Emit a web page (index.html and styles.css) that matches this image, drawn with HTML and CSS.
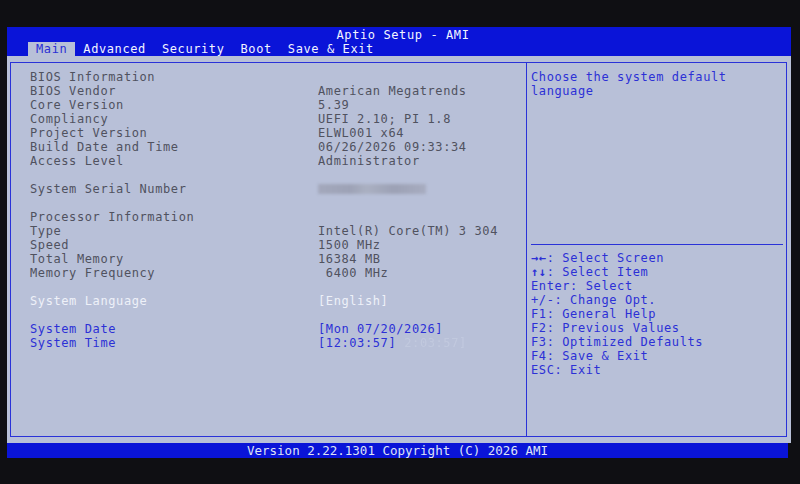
FILE: index.html
```html
<!DOCTYPE html>
<html>
<head>
	<title>Aptio Setup - AMI</title>
	<link rel="stylesheet" href="styles.css">
</head>
<body>
	<div class="screen">
		<div class="header">
			<div class="title">Aptio Setup - AMI</div>
			<div class="tabs">
				<span class="tab active">Main</span>
				<span class="tab">Advanced</span>
				<span class="tab">Security</span>
				<span class="tab">Boot</span>
				<span class="tab">Save &amp; Exit</span>
			</div>
		</div>

		<div class="body">
			<div class="frame">
				<div class="main-panel">
					<div class="row"><span class="label">BIOS Information</span></div>
					<div class="row"><span class="label">BIOS Vendor</span><span class="value">American Megatrends</span></div>
					<div class="row"><span class="label">Core Version</span><span class="value">5.39</span></div>
					<div class="row"><span class="label">Compliancy</span><span class="value">UEFI 2.10; PI 1.8</span></div>
					<div class="row"><span class="label">Project Version</span><span class="value">ELWL001 x64</span></div>
					<div class="row"><span class="label">Build Date and Time</span><span class="value">06/26/2026 09:33:34</span></div>
					<div class="row"><span class="label">Access Level</span><span class="value">Administrator</span></div>
					<div class="row"></div>
					<div class="row"><span class="label">System Serial Number</span><span class="value"><span class="blurred"></span></span></div>
					<div class="row"></div>
					<div class="row"><span class="label">Processor Information</span></div>
					<div class="row"><span class="label">Type</span><span class="value">Intel(R) Core(TM) 3 304</span></div>
					<div class="row"><span class="label">Speed</span><span class="value">1500 MHz</span></div>
					<div class="row"><span class="label">Total Memory</span><span class="value">16384 MB</span></div>
					<div class="row"><span class="label">Memory Frequency</span><span class="value"> 6400 MHz</span></div>
					<div class="row"></div>
					<div class="row selected"><span class="label">System Language</span><span class="value">[English]</span></div>
					<div class="row"></div>
					<div class="row option"><span class="label">System Date</span><span class="value">[Mon 07/20/2026]</span></div>
					<div class="row option"><span class="label">System Time</span><span class="value">[12:03:57]<span class="ghost">2:03:57]</span></span></div>
				</div>

				<div class="side-panel">
					<div class="help-text">Choose the system default<br>language</div>
					<div class="divider"></div>
					<div class="keys">
						<div class="row"><span class="arrows">&rarr;&larr;</span>: Select Screen</div>
						<div class="row"><span class="arrows">&uarr;&darr;</span>: Select Item</div>
						<div class="row">Enter: Select</div>
						<div class="row">+/-: Change Opt.</div>
						<div class="row">F1: General Help</div>
						<div class="row">F2: Previous Values</div>
						<div class="row">F3: Optimized Defaults</div>
						<div class="row">F4: Save &amp; Exit</div>
						<div class="row">ESC: Exit</div>
					</div>
				</div>
			</div>
		</div>

		<div class="footer">Version 2.22.1301 Copyright (C) 2026 AMI</div>
	</div>
</body>
</html>
```

FILE: styles.css
```css
/* Aptio BIOS main screen, ~7.8px character cells, 14px rows */

body {
	margin: 0;
	height: 484px;
	overflow: hidden;
	background: #0f0f13;
	font-family: "DejaVu Sans Mono", "Liberation Mono", monospace;
	font-size: 12px;
	letter-spacing: 0.6px;
}

.screen {
	margin: 27px 9px 0 7px;
	width: 784px;
}

.header {
	background: #0a14d8;
	color: #f2f4ff;
	height: 29px;
	display: flex;
	flex-direction: column;
}

.title {
	height: 15px;
	line-height: 16px;
	text-align: center;
	padding-left: 8px;
}

.tabs {
	display: flex;
	height: 14px;
	line-height: 15px;
	padding-left: 21px;
}

.tab {
	padding: 0 8px;
	white-space: pre;
}

.tab.active {
	background: #b8c0d8;
	color: #2a2ed4;
}

.body {
	background: #b8c0d8;
	height: 387px;
	padding: 6px 4px 0 3px;
	box-sizing: border-box;
}

.frame {
	display: flex;
	height: 375px;
	border: 1px solid #2a32d8;
	box-sizing: border-box;
}

.main-panel {
	width: 516px;
	border-right: 1px solid #2a32d8;
	padding: 7px 0 0 19px;
	box-sizing: border-box;
}

.row {
	height: 14px;
	line-height: 14px;
	white-space: pre;
	display: flex;
}

.label {
	width: 288px;
	color: #50525f;
}

.value {
	color: #50525f;
}

.selected .label,
.selected .value {
	color: #eef1f8;
}

.option .label,
.option .value {
	color: #2c30d6;
}

.blurred {
	display: inline-block;
	width: 108px;
	height: 10px;
	margin-top: 2px;
	background: linear-gradient(90deg, #a3a8bc 0%, #9da2b6 30%, #aab0c2 45%, #9ca1b5 70%, #a7acc0 100%);
	filter: blur(1.5px);
}

.ghost {
	margin-left: 8px;
	color: rgba(228, 232, 244, 0.22);
	filter: blur(0.7px);
}

.side-panel {
	flex: 1;
	padding: 7px 3px 0 4px;
	color: #2c30d6;
}

.help-text {
	height: 167px;
	line-height: 14px;
}

.divider {
	height: 1px;
	background: #2a32d8;
	margin: 7px 0 6px 0;
}

.arrows {
	font-weight: bold;
}

.footer {
	background: #0a14d8;
	color: #dfe3f6;
	height: 15px;
	line-height: 15px;
	text-align: center;
	font-size: 12.5px;
	letter-spacing: 0;
	margin-right: 3px;
}
```
